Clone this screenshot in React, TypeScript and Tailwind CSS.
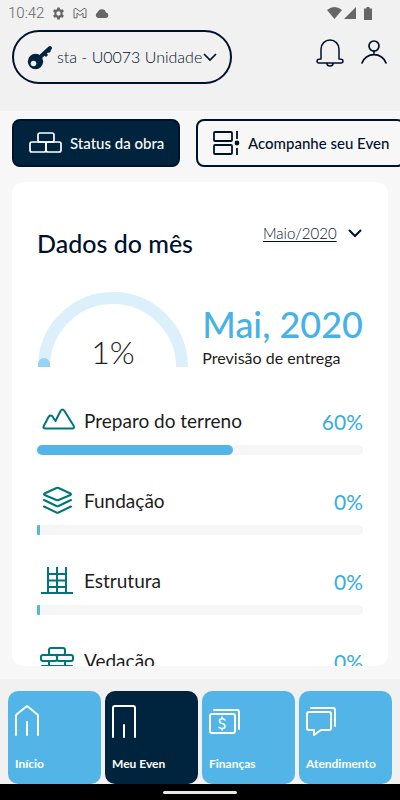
import type { ReactNode } from "react";

const stages = [
  { name: "Preparo do terreno", percent: 60, icon: <TerrainIcon /> },
  { name: "Fundação", percent: 0, icon: <LayersIcon /> },
  { name: "Estrutura", percent: 0, icon: <StructureIcon /> },
  { name: "Vedação", percent: 0, icon: <WallIcon /> },
];

const navItems = [
  { name: "Início", icon: <HomeIcon /> },
  { name: "Meu Even", icon: <DoorIcon />, active: true },
  { name: "Finanças", icon: <MoneyIcon /> },
  { name: "Atendimento", icon: <ChatIcon /> },
];

function Svg({
  width,
  height,
  className = "",
  stroke = 2,
  children,
}: {
  width: number;
  height: number;
  className?: string;
  stroke?: number;
  children: ReactNode;
}) {
  return (
    <svg
      width={width}
      height={height}
      viewBox={`0 0 ${width} ${height}`}
      fill="none"
      stroke="currentColor"
      strokeWidth={stroke}
      strokeLinecap="round"
      strokeLinejoin="round"
      className={`shrink-0 ${className}`}
      aria-hidden="true"
    >
      {children}
    </svg>
  );
}

function TerrainIcon() {
  return (
    <Svg width={36} height={28}>
      <path d="M7.500 22.500H33q3 0 1.500-3L25.500 5q-2-3-4 0L16.500 15 13.500 10.500q-1.700-2-3.700 0L5 19.500q-1.500 3 1.500 3z" />
    </Svg>
  );
}

function LayersIcon() {
  return (
    <Svg width={36} height={28}>
      <path d="M5.500 7.500 17.500 2q1-.4 2 0L31.500 7.500q1 .8 0 1.500L19.500 14q-1 .4-2 0L5.500 9q-1-.7 0-1.500z" />
      <path d="M5 14l12.500 6q1 .4 2 0L32 14M5 20.500l12.500 6q1 .4 2 0L32 20.500" />
    </Svg>
  );
}

function StructureIcon() {
  return (
    <Svg width={36} height={28}>
      <path d="M2 27h32M9 1v26M18 1v26M27 1v26M9 8h18M9 14.500h18M9 21h18" strokeLinecap="butt" />
    </Svg>
  );
}

function WallIcon() {
  return (
    <Svg width={36} height={28}>
      <rect x="10" y="2" width="16" height="7" rx="2" />
      <rect x="2" y="9" width="16" height="6" rx="2" />
      <rect x="18" y="9" width="16" height="6" rx="2" />
      <path d="M10 15v5M26 15v5M3 20h30" />
    </Svg>
  );
}

function HomeIcon() {
  return (
    <Svg width={32} height={36}>
      <path d="M1 30V11q0-1 .8-1.700L11 1.700q1-.8 2 0l9.200 7.600q.8.700.8 1.700V30M12 17v13" />
    </Svg>
  );
}

function DoorIcon() {
  return (
    <Svg width={32} height={36}>
      <path d="M1 32V3q0-2 2-2h18q2 0 2 2v29M12 20v12" />
    </Svg>
  );
}

function MoneyIcon() {
  return (
    <Svg width={32} height={36}>
      <rect x="1" y="9" width="25" height="19" rx="2" />
      <path d="M5 5h23q2 0 2 2v17" />
      <path
        d="M16 15q-1.200-1.300-3-1.200-2.500.2-2.500 2.200t2.500 2.500q3 .5 3 2.700t-2.700 2.200q-2 .1-3.300-1.200M13 12v1.500M13 23.500v1.500"
        strokeWidth="1.500"
      />
    </Svg>
  );
}

function ChatIcon() {
  return (
    <Svg width={32} height={36}>
      <path d="M3 7h20q2 0 2 2v14q0 2-2 2h-8l-7 5v-5H3q-2 0-2-2V9q0-2 2-2z" />
      <path d="M5 3h22q2 0 2 2v16" />
    </Svg>
  );
}

function Chevron({ className = "", stroke = 2 }: { className?: string; stroke?: number }) {
  return (
    <Svg width={16} height={10} stroke={stroke} className={className}>
      <path d="M2 2l6 6 6-6" strokeLinecap="butt" strokeLinejoin="miter" />
    </Svg>
  );
}

function StatusBar() {
  return (
    <div className="flex items-center justify-between h-[26px] pl-2 pr-7 text-[#666]">
      <div className="flex items-center gap-2">
        <span className="font-[Roboto] font-light text-[15px] leading-5">10:42</span>
        <svg width="13" height="13" viewBox="0 0 24 24" fill="currentColor">
          <path
            fillRule="evenodd"
            d="M9.800 1h4.400l.6 3.200 2 1.100 3-1.100 2.200 3.800-2.500 2.100v3.800l2.500 2.100-2.200 3.800-3-1.100-2 1.100-.6 3.200H9.800l-.6-3.200-2-1.100-3 1.100L2 16l2.500-2.100v-3.800L2 8l2.200-3.800 3 1.100 2-1.100zM12 8a4 4 0 1 0 0 8 4 4 0 0 0 0-8z"
          />
        </svg>
        <Svg width={14} height={12} stroke={1}>
          <path d="M1 10.500V2.500Q1.500 1 3 1.500l4 3 4-3q1.500-.5 2 1v8h-3V6L7 8.500 4 6v4.500z" />
        </Svg>
        <svg width="14" height="9" viewBox="0 0 14 9" fill="currentColor">
          <path d="M3 9a3 3 0 0 1-.3-5.700A4.300 4.300 0 0 1 11 3.500 2.800 2.800 0 0 1 11.200 9z" />
        </svg>
      </div>
      <div className="flex items-center">
        <svg width="15" height="12" viewBox="0 0 15 12" fill="currentColor">
          <path d="M0 3q7.500-6 15 0L7.500 12z" />
        </svg>
        <svg width="12" height="12" viewBox="0 0 12 12" fill="currentColor" className="ml-0.5">
          <path d="M12 0v12H0z" />
        </svg>
        <svg width="8" height="13" viewBox="0 0 8 13" fill="currentColor" className="ml-2">
          <path d="M2.500 0h3v1.500H8V13H0V1.500h2.500z" />
        </svg>
      </div>
    </div>
  );
}

function Header() {
  return (
    <header className="bg-[#f1f1f1] pb-[27px]">
      <StatusBar />
      <div className="flex items-start justify-between pt-1 pl-3 pr-3">
        <label className="flex items-center h-[54px] w-[220px] rounded-full border-2 border-[#00112c] pl-3 pr-3">
          <svg width="28" height="28" viewBox="0 0 28 28" fill="none" className="shrink-0 text-[#00243e]">
            <path d="M12 16L24 5" stroke="currentColor" strokeWidth="4" strokeLinecap="round" />
            <path d="M18 10l3 3M21.500 6.500L24 9" stroke="currentColor" strokeWidth="3" />
            <circle cx="9.500" cy="18.500" r="7.700" fill="currentColor" />
            <circle cx="7.500" cy="20.500" r="2.800" fill="#f1f1f1" />
          </svg>
          <select
            aria-label="Unidade"
            className="appearance-none flex-1 min-w-0 ml-[3px] bg-transparent font-light text-[16px] leading-5 text-[#00112c] outline-none"
          >
            <option>sta - U0073 Unidade</option>
          </select>
          <Chevron stroke={1.7} className="text-[#00112c]" />
        </label>
        <div className="flex items-center gap-4 pt-2 text-[#00112c]">
          <button type="button" aria-label="Notificações">
            <Svg width={28} height={30} stroke={1.5}>
              <path d="M5 21V11a9 9 0 0 1 18 0v10q4 0 4 2 0 2-2 2H3q-2 0-2-2 0-2 4-2M11 25.500a3 2.500 0 0 0 6 0" />
            </Svg>
          </button>
          <button type="button" aria-label="Perfil">
            <Svg width={28} height={30} stroke={1.7}>
              <circle cx="14" cy="8" r="5" />
              <path d="M2 25a12.500 11.500 0 0 1 24 0M14 13v2" />
            </Svg>
          </button>
        </div>
      </div>
    </header>
  );
}

function Tabs() {
  return (
    <div className="flex shrink-0 gap-4 pl-3 overflow-hidden text-[15px] leading-5 whitespace-nowrap">
      <button
        type="button"
        className="flex items-center shrink-0 w-[168px] h-12 gap-2 pl-[15px] rounded-lg border-2 border-[#00112c] bg-[#00243e] font-medium text-white"
      >
        <Svg width={33} height={22} stroke={1.7}>
          <rect x="9" y="1" width="16" height="9" rx="2" />
          <rect x="1" y="10" width="16" height="10" rx="2" />
          <rect x="17" y="10" width="15" height="10" rx="2" />
        </Svg>
        Status da obra
      </button>
      <button
        type="button"
        className="flex items-center shrink-0 h-12 gap-[6px] px-[14px] rounded-lg border-2 border-[#00112c] font-medium text-[#00112c]"
      >
        <Svg width={30} height={24} stroke={1.8}>
          <rect x="2" y="1" width="18" height="9" rx="1" />
          <rect x="2" y="14" width="18" height="9" rx="1" />
          <path d="M25 0v8M25 17v7" strokeLinecap="butt" />
          <circle cx="25" cy="12" r="1.500" fill="currentColor" />
        </Svg>
        Acompanhe seu Even
      </button>
    </div>
  );
}

function Gauge() {
  return (
    <div className="relative w-[152px] shrink-0 pb-px">
      <svg width="152" height="76" viewBox="0 0 152 76" aria-hidden="true">
        <path d="M7 76a69 69 0 0 1 138 0" fill="none" stroke="#dcf0fc" strokeWidth="12" />
        <path d="M1 76v-3a6 6 0 0 1 12 0v3z" fill="#96d3f2" />
      </svg>
      <span className="absolute inset-x-0 bottom-0.5 text-center font-light text-[32px] leading-7 text-[#222]">
        1%
      </span>
    </div>
  );
}

function StageRow({ name, percent, icon }: (typeof stages)[number]) {
  return (
    <li className="h-20 shrink-0">
      <div className="flex items-center h-8">
        <span className="ml-0.5 text-[#00767a]">{icon}</span>
        <span className="ml-[9px] pt-0.5 text-[19px] leading-6 text-[#1c1c1c]">{name}</span>
        <span className="ml-auto pt-1 text-[21px] leading-6 text-[#36ace5]">{percent}%</span>
      </div>
      <div className="mt-[9px] h-[10px] rounded-full bg-[#f6f6f6]">
        <div
          className={`h-full min-w-[3px] bg-[#53b5e7] ${percent > 0 ? "rounded-full" : "rounded-[1px]"}`}
          style={{ width: `${percent}%` }}
        />
      </div>
    </li>
  );
}

function App() {
  return (
    <div className="flex flex-col h-dvh bg-[#f7f7f7] font-[Lato,sans-serif] overflow-hidden">
      <Header />
      <main className="flex flex-col flex-1 min-h-0 pt-2 pb-[13px]">
        <Tabs />
        <section className="flex-1 min-h-0 mx-3 mt-[15px] px-[25px] rounded-xl bg-white overflow-hidden">
          <div className="flex items-start justify-between pt-[41px]">
            <h1 className="pt-1 text-[25px] leading-8 font-medium text-[#00112c]">Dados do mês</h1>
            <label className="flex items-center gap-[10px] text-[#00112c]">
              <select
                aria-label="Mês"
                className="appearance-none bg-transparent font-light text-[15px] leading-5 underline underline-offset-2 outline-none"
              >
                <option>Maio/2020</option>
              </select>
              <Chevron />
            </label>
          </div>

          <div className="flex items-end justify-between mt-8">
            <Gauge />
            <div className="whitespace-nowrap">
              <p className="text-[36px] leading-10 font-medium text-[#46b2e7]">Mai, 2020</p>
              <p className="mt-1 text-[16px] leading-5 text-[#1c1c1c]">Previsão de entrega</p>
            </div>
          </div>

          <ul className="flex flex-col mt-9">
            {stages.map((stage) => (
              <StageRow key={stage.name} {...stage} />
            ))}
          </ul>
        </section>
      </main>

      <nav className="grid grid-cols-4 gap-1 px-2 pt-3 bg-[#f1f1f1]">
        {navItems.map((item) => (
          <a
            key={item.name}
            href="#"
            className={`flex flex-col justify-between h-[93px] rounded-[10px] pt-[14px] pb-3 pl-[7px] text-white ${
              item.active ? "bg-[#00243e]" : "bg-[#53b5e7]"
            }`}
          >
            {item.icon}
            <span className="text-[12px] leading-4 font-bold">{item.name}</span>
          </a>
        ))}
      </nav>
      <div className="flex items-center justify-center h-4 shrink-0 bg-black">
        <div className="w-[74px] h-[3px] rounded-full bg-[#e8e8e8]" />
      </div>
    </div>
  );
}

export default App;
